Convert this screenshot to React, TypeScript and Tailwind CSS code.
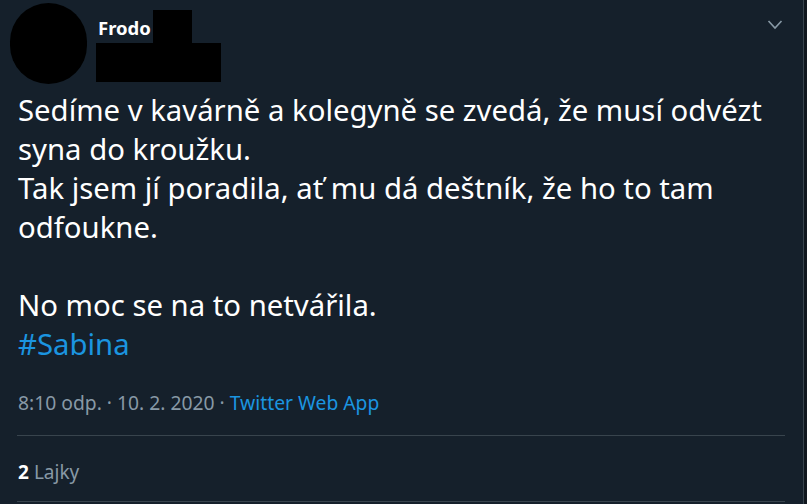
import React from 'react';

const lines = [
  'Sedíme v kavárně a kolegyně se zvedá, že musí odvézt',
  'syna do kroužku.',
  'Tak jsem jí poradila, ať mu dá deštník, že ho to tam',
  'odfoukne.',
];

export default function App() {
  return (
    <div
      className="w-[807px] h-[504px] bg-[#10171e] flex overflow-hidden"
      style={{ fontFamily: '"Noto Sans", "Open Sans", sans-serif' }}
    >
      <div className="w-[804px] h-full bg-[#15202b] border-r border-[#38444d] flex flex-col">
        {/* header */}
        <div className="flex h-[87px] shrink-0">
          <div className="w-[77px] h-[81px] rounded-full bg-black ml-[10px] mt-[3px]" />
          <div className="ml-[9px] flex flex-col">
            <div className="flex items-start">
              <span className="text-white font-bold text-[18.5px] mt-[16px] leading-[24px] ml-[2px] w-[55px]">Frodo</span>
              <div className="w-[39px] h-[33px] bg-black mt-[10px]" />
            </div>
            <div className="w-[125px] h-[39px] bg-black" />
          </div>
          <div className="ml-auto mr-[20px] mt-[19px]">
            <svg width="16" height="12" viewBox="0 0 16 12" fill="none">
              <path d="M1.5 2 L8 9 L14.5 2" stroke="#8899a6" strokeWidth="1.6" />
            </svg>
          </div>
        </div>

        {/* body */}
        <div className="pl-[18px] mt-[4px] text-white text-[29.3px] leading-[39px]">
          {lines.map((l) => (
            <div key={l} className="whitespace-nowrap">{l}</div>
          ))}
          <div className="h-[39px]" />
          <div>No moc se na to netvářila.</div>
          <div className="text-[#1b95e0]">#Sabina</div>
        </div>

        {/* meta */}
        <div className="pl-[18px] mt-[27px] text-[19.3px] leading-[24px] text-[#8899a6] whitespace-nowrap">
          8:10 odp. · 10. 2. 2020 · <span className="text-[#1b95e0]">Twitter Web App</span>
        </div>

        <div className="ml-[17px] mr-[18px] mt-[20px] border-t border-[#38444d]" />

        <div className="pl-[18px] h-[65px] pt-[24px] text-[19px] leading-[24px] text-[#8899a6]">
          <span className="text-white font-bold mr-[5px]">2</span>
          <span>Lajky</span>
        </div>

        <div className="ml-[17px] mr-[18px] border-t border-[#38444d]" />
      </div>
    </div>
  );
}
